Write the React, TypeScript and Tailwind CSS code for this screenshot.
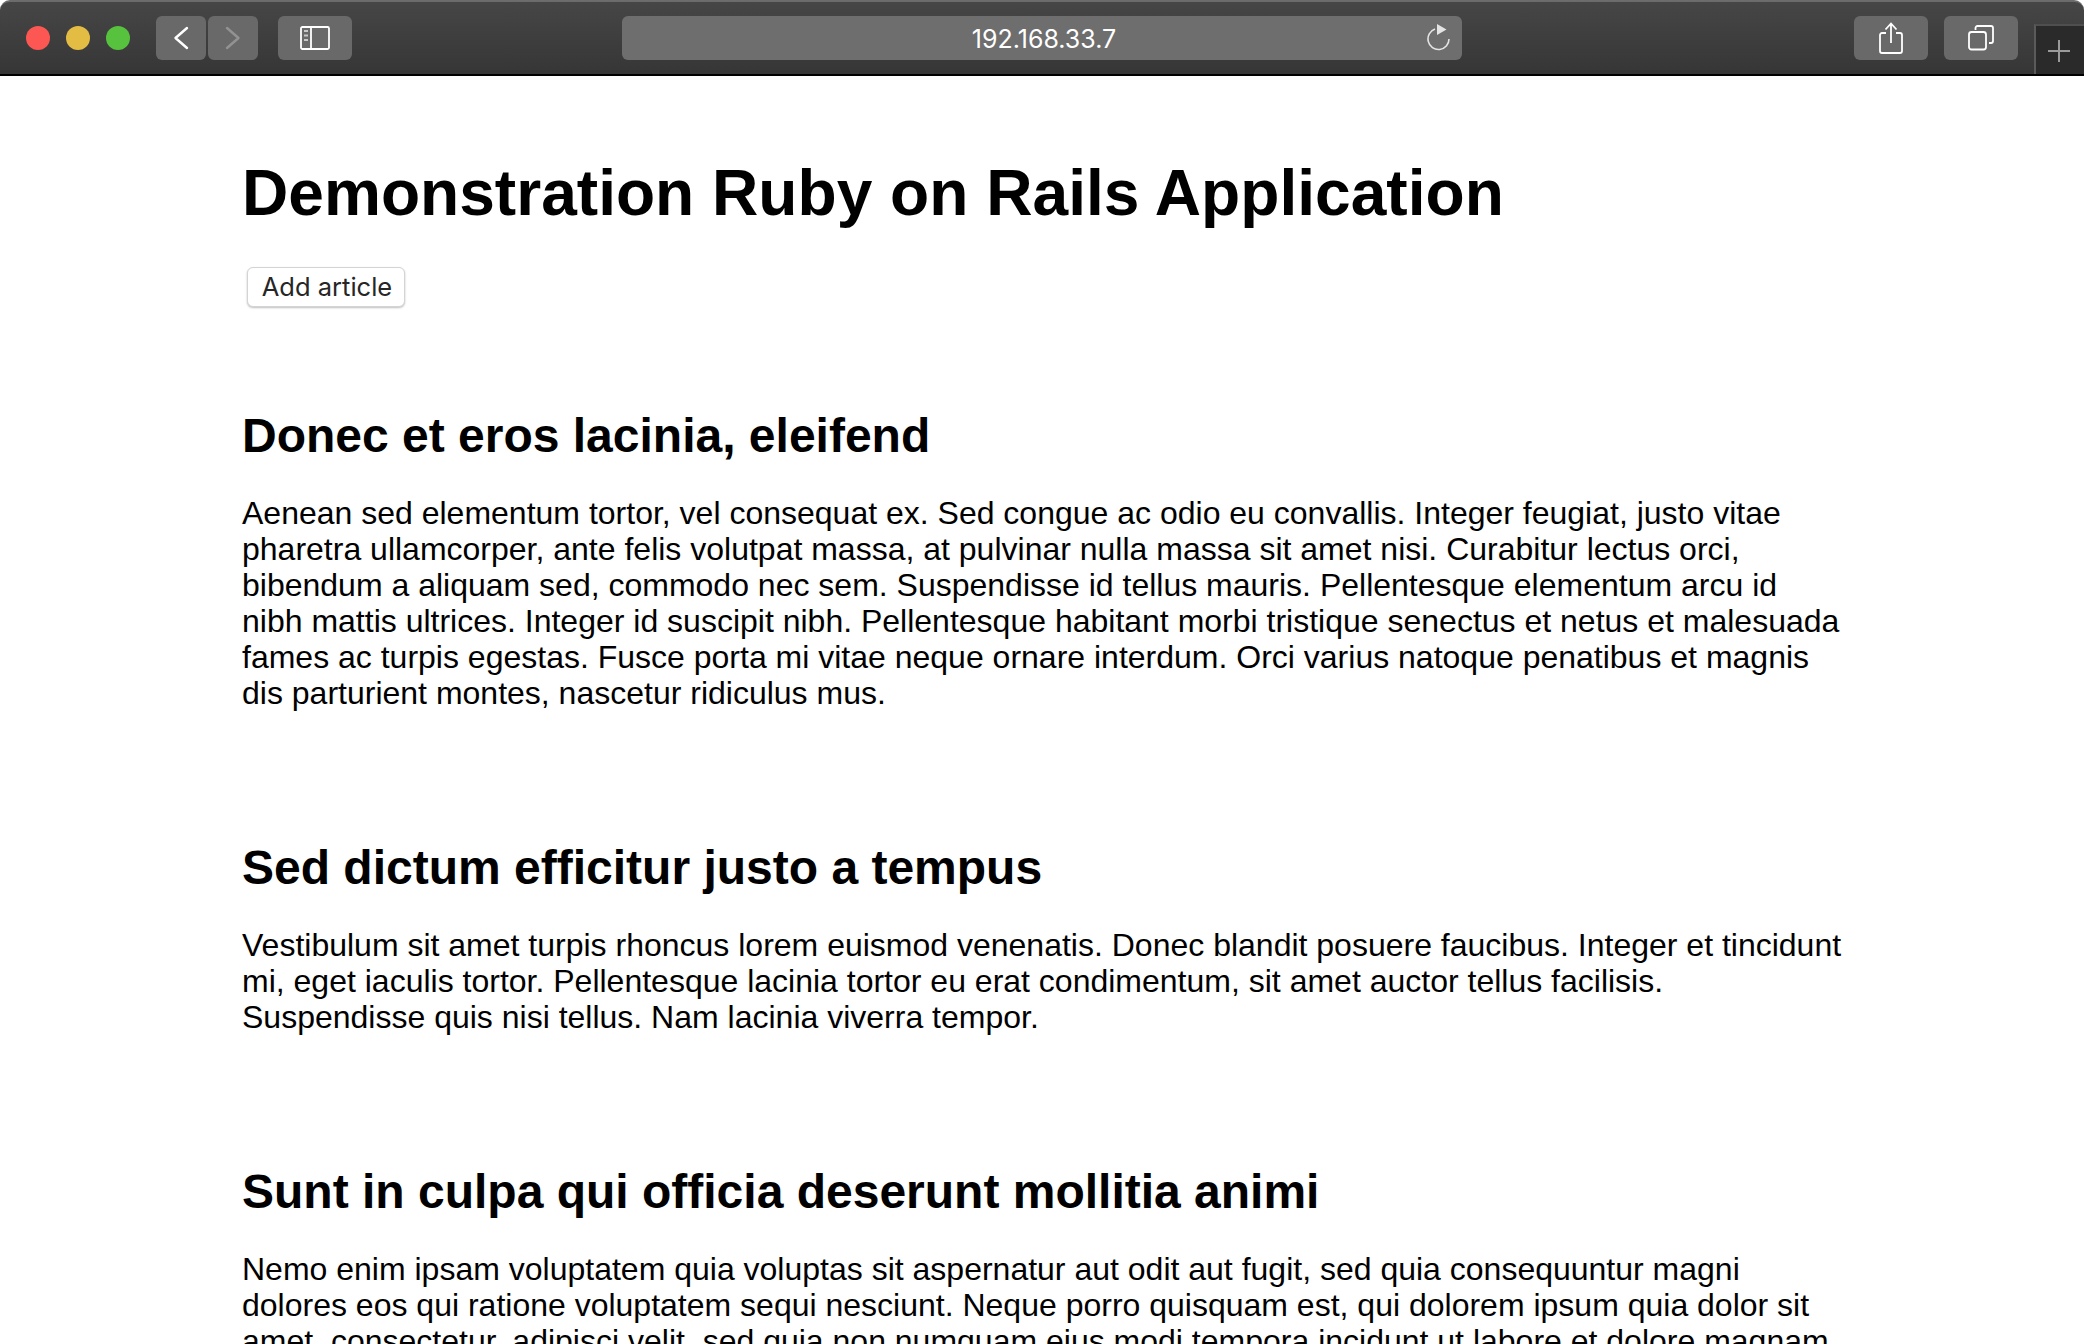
import React from "react";

function ChevronLeft() {
  return (
    <svg width="16" height="24" viewBox="0 0 16 24" fill="none" stroke="#ffffff" strokeWidth="2.4" strokeLinecap="round" strokeLinejoin="round">
      <path d="M14 2 L2.5 12 L14 22" />
    </svg>
  );
}
function ChevronRight() {
  return (
    <svg width="16" height="24" viewBox="0 0 16 24" fill="none" stroke="#929292" strokeWidth="2.4" strokeLinecap="round" strokeLinejoin="round">
      <path d="M2 2 L13.5 12 L2 22" />
    </svg>
  );
}
function Sidebar() {
  return (
    <svg width="30" height="24" viewBox="0 0 30 24" fill="none">
      <rect x="1" y="1" width="28" height="22" rx="1.5" stroke="#fff" strokeWidth="1.8" />
      <path d="M11 1 V23" stroke="#fff" strokeWidth="1.8" />
      <path d="M4 5 H8 M4 9.5 H8 M4 14 H8" stroke="#c8c8c8" strokeWidth="2" />
    </svg>
  );
}
function Reload() {
  return (
    <svg width="24" height="28" viewBox="0 0 24 28" fill="none">
      <path d="M8 6.1 A10.5 10.5 0 1 0 22 16" stroke="#e4e4e4" strokeWidth="1.6" />
      <path d="M10 1 L19.5 6.5 L10 12 Z" fill="#e4e4e4" />
    </svg>
  );
}
function Share() {
  return (
    <svg width="24" height="32" viewBox="0 0 24 32" fill="none" stroke="#fff" strokeWidth="1.8">
      <path d="M7 11 H3 a2 2 0 0 0 -2 2 V29 a2 2 0 0 0 2 2 H21 a2 2 0 0 0 2 -2 V13 a2 2 0 0 0 -2 -2 H17" />
      <path d="M12 1.5 V21 M6.5 7.5 L12 1.5 L17.5 7.5" />
    </svg>
  );
}
function Tabs() {
  return (
    <svg width="26" height="26" viewBox="0 0 26 26" fill="none" stroke="#fff" strokeWidth="1.8">
      <rect x="1" y="7" width="17" height="17.5" rx="2.5" />
      <path d="M7.5 5 V3 a2 2 0 0 1 2 -2 H23 a2 2 0 0 1 2 2 V16 a2 2 0 0 1 -2 2 H21" />
    </svg>
  );
}

const sans = "font-['Liberation_Sans','Helvetica',Arial,sans-serif]";

function Article({ title, children }: { title: string; children: React.ReactNode }) {
  return (
    <section className="mb-[129px]">
      <h2 className="text-[48px] leading-[56px] font-bold text-black mb-[31px]">{title}</h2>
      <p className="text-[32px] leading-[36px] text-black">{children}</p>
    </section>
  );
}

export default function App() {
  return (
    <div className={`h-[1344px] w-[2084px] overflow-hidden bg-white ${sans}`}>
      <header className="relative flex h-[76px] items-start overflow-hidden rounded-t-[10px] border-t-2 border-b-2 border-t-[#6c6c6c] border-b-black bg-gradient-to-b from-[#464646] to-[#363636]">
        <div className="ml-[26px] mt-[24px] flex gap-[16px]">
          <span className="h-[24px] w-[24px] rounded-full bg-[#fc5753]" />
          <span className="h-[24px] w-[24px] rounded-full bg-[#e3bd43]" />
          <span className="h-[24px] w-[24px] rounded-full bg-[#57c23e]" />
        </div>
        <div className="ml-[26px] mt-[14px] flex gap-[2px]">
          <button className="flex h-[44px] w-[50px] items-center justify-center rounded-[6px] bg-[#696969]"><ChevronLeft /></button>
          <button className="flex h-[44px] w-[50px] items-center justify-center rounded-[6px] bg-[#696969]"><ChevronRight /></button>
        </div>
        <button className="ml-[20px] mt-[14px] flex h-[44px] w-[74px] items-center justify-center rounded-[6px] bg-[#696969]"><Sidebar /></button>
        <div className="relative ml-[270px] mt-[14px] flex h-[44px] w-[840px] items-center justify-center rounded-[6px] bg-[#6e6e6e]">
          <span className="ml-[4px] mt-[4px] font-['Inter',sans-serif] text-[25px] text-white">192.168.33.7</span>
          <span className="absolute right-[11px] top-[7px]"><Reload /></span>
        </div>
        <button className="ml-[392px] mt-[14px] flex h-[44px] w-[74px] items-center justify-center rounded-[6px] bg-[#696969]"><Share /></button>
        <button className="ml-[16px] mt-[14px] flex h-[44px] w-[74px] items-center justify-center rounded-[6px] bg-[#696969]"><Tabs /></button>
        <div className="absolute bottom-0 right-0 flex h-[50px] w-[50px] items-center justify-center border-l-2 border-t-2 border-l-[#5a5a5a] border-t-[#4f4f4f] bg-[#2a2a2a]">
          <svg className="mr-[2px] mt-[2px]" width="22" height="22" viewBox="0 0 22 22" stroke="#9a9a9a" strokeWidth="2"><path d="M11 0 V22 M0 11 H22" /></svg>
        </div>
      </header>
      <main className="w-[1600px] ml-[242px] pt-[80px]">
        <h1 className="text-[64.1px] leading-[74px] font-bold text-black">Demonstration Ruby on Rails Application</h1>
        <button className="ml-[5px] mt-[37px] flex h-[40px] w-[158px] items-center justify-center rounded-[6px] border border-[#d4d4d4] bg-white pl-[2px] font-['Inter',sans-serif] text-[25.5px] text-[#262626] shadow-[0_1px_2px_rgba(0,0,0,0.25)]">Add article</button>
        <div className="mt-[101px]">
          <Article title="Donec et eros lacinia, eleifend">
            Aenean sed elementum tortor, vel consequat ex. Sed congue ac odio eu convallis. Integer feugiat, justo vitae pharetra ullamcorper, ante felis volutpat massa, at pulvinar nulla massa sit amet nisi. Curabitur lectus orci, bibendum a aliquam sed, commodo nec sem. Suspendisse id tellus mauris. Pellentesque elementum arcu id nibh mattis ultrices. Integer id suscipit nibh. Pellentesque habitant morbi tristique senectus et netus et malesuada fames ac turpis egestas. Fusce porta mi vitae neque ornare interdum. Orci varius natoque penatibus et magnis dis parturient montes, nascetur ridiculus mus.
          </Article>
          <Article title="Sed dictum efficitur justo a tempus">
            Vestibulum sit amet turpis rhoncus lorem euismod venenatis. Donec blandit posuere faucibus. Integer et tincidunt mi, eget iaculis tortor. Pellentesque lacinia tortor eu erat condimentum, sit amet auctor tellus facilisis. Suspendisse quis nisi tellus. Nam lacinia viverra tempor.
          </Article>
          <Article title="Sunt in culpa qui officia deserunt mollitia animi">
            Nemo enim ipsam voluptatem quia voluptas sit aspernatur aut odit aut fugit, sed quia consequuntur magni dolores eos qui ratione voluptatem sequi nesciunt. Neque porro quisquam est, qui dolorem ipsum quia dolor sit amet, consectetur, adipisci velit, sed quia non numquam eius modi tempora incidunt ut labore et dolore magnam aliquam quaerat voluptatem.
          </Article>
        </div>
      </main>
    </div>
  );
}
